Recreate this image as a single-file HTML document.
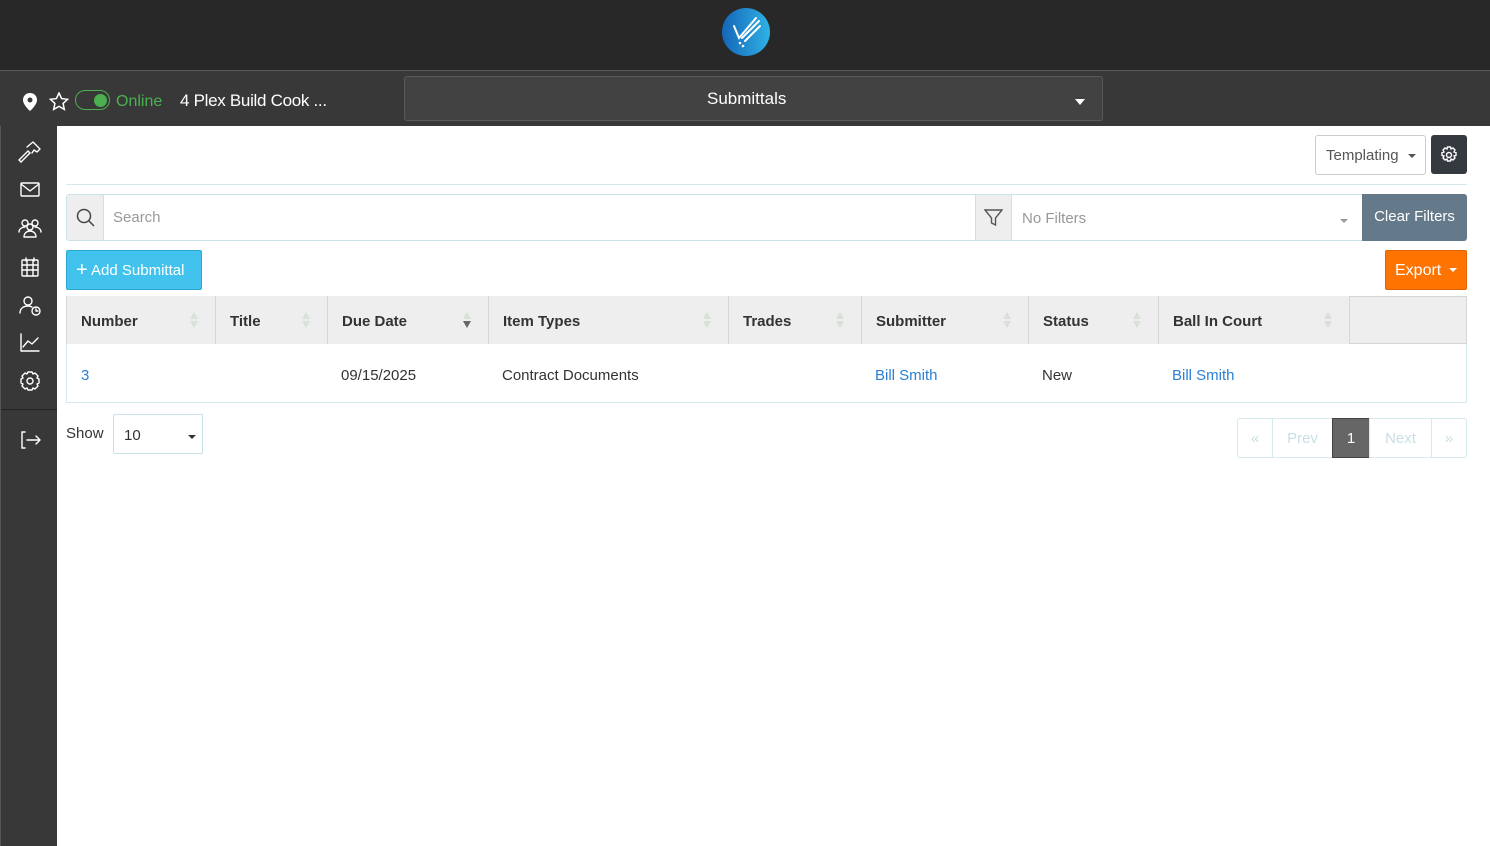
<!DOCTYPE html>
<html><head><meta charset="utf-8"><style>
*{box-sizing:border-box;margin:0;padding:0}
body{width:1490px;height:846px;overflow:hidden;background:#fff;font-family:"Liberation Sans",sans-serif;position:relative}
.a{position:absolute;white-space:nowrap}
.top{left:0;top:0;width:1490px;height:71px;background:#282828;border-bottom:1px solid #5a5a5a}
.bar2{left:0;top:71px;width:1490px;height:55px;background:#383838}
.side{left:0;top:126px;width:57px;height:720px;background:#383838;border-left:1px solid #555}
.hc{position:absolute;top:296px;height:48px;border-right:1px solid #d6d6d6;font-weight:bold;font-size:15px;color:#333;padding:17px 14px;background:#eee;white-space:nowrap}
.txt{font-size:15px;color:#333;top:367px}
.blue{color:#2a7fd4}
.pg{position:absolute;top:418px;height:40px;border:1px solid #d6e9ec;font-size:15px;color:#c8dfe3;text-align:center;line-height:39px}
</style></head><body>
<div class="a top"></div>
<svg class="a" style="left:722px;top:8px" width="48" height="48" viewBox="0 0 48 48">
<defs><linearGradient id="g" x1="0" x2="1"><stop offset="0" stop-color="#1565b8"/><stop offset="1" stop-color="#2fb2e6"/></linearGradient></defs>
<circle cx="24" cy="24" r="24" fill="url(#g)"/>
<g stroke="#fff" stroke-width="2" fill="none" stroke-linecap="round"><path d="M12 18 L17 30 L34 10"/><path d="M20 30 L37 13"/><path d="M23 33 L38 18"/></g>
<g fill="#fff"><circle cx="18" cy="35" r="1.3"/><circle cx="21" cy="38" r="1.3"/></g>
</svg>
<div class="a bar2"></div>
<svg class="a" style="left:23px;top:93px" width="14" height="18" viewBox="0 0 14 18"><path d="M7 0C3 0 0 3 0 7c0 5 7 11 7 11s7-6 7-11c0-4-3-7-7-7z" fill="#fff"/><circle cx="7" cy="7" r="2.5" fill="#383838"/></svg>
<svg class="a" style="left:49px;top:92px" width="20" height="19" viewBox="0 0 20 19"><path d="M10 1l2.6 5.6 6 .7-4.5 4.1 1.2 6L10 14.4 4.7 17.4l1.2-6L1.4 7.3l6-.7z" fill="none" stroke="#fff" stroke-width="1.5"/></svg>
<div class="a" style="left:75px;top:90px;width:35px;height:20px;border:1.5px solid #4caf50;border-radius:10px"></div>
<div class="a" style="left:94px;top:94px;width:13px;height:13px;border-radius:50%;background:#4caf50"></div>
<div class="a" style="left:116px;top:93px;color:#4caf50;font-size:16px">Online</div>
<div class="a" style="left:180px;top:91px;color:#fff;font-size:17px;letter-spacing:-0.3px">4 Plex Build Cook ...</div>
<div class="a" style="left:404px;top:76px;width:699px;height:45px;background:#424242;border:1px solid #5a5a5a;border-radius:3px"></div>
<div class="a" style="left:707px;top:89px;color:#fff;font-size:17px">Submittals</div>
<div class="a" style="left:1075px;top:99px;border-left:5px solid transparent;border-right:5px solid transparent;border-top:6px solid #fff"></div>
<div class="a side"></div>
<svg class="a" style="left:0;top:126px" width="57" height="340" viewBox="0 0 57 340" fill="none" stroke="#fff" stroke-width="1.4" stroke-linecap="round" stroke-linejoin="round">
<path d="M21 36l9-9M27 21l6-5 7 7-3 3-3-2-2 3"/><path d="M21 36l-2-2 9-9 2 2"/>
<rect x="21" y="57" width="18" height="13" rx="1"/><path d="M21 58l9 7 9-7"/>
<circle cx="25" cy="97" r="3"/><circle cx="35" cy="97" r="3"/><circle cx="30" cy="101" r="3"/><path d="M19 106c0-3 3-5 6-5M41 106c0-3-3-5-6-5M24 111c0-4 3-6 6-6s6 2 6 6z"/>
<rect x="22" y="134" width="16" height="16" rx="1"/><path d="M22 139h16M22 144h16M27 134v16M33 134v16M26 132v3M34 132v3"/>
<circle cx="28" cy="175" r="4"/><path d="M20 187c0-5 4-7 8-7 2 0 3 .5 4 1"/><circle cx="36" cy="185" r="4"/><path d="M36 183v2h2"/>
<path d="M21 208v17h18M23 221l5-6 4 3 6-6"/>
<circle cx="30" cy="255" r="3"/><path d="M28 246h4l1 2 2-1 3 3-1 2 2 1v4l-2 1 1 2-3 3-2-1-1 2h-4l-1-2-2 1-3-3 1-2-2-1v-4l2-1-1-2 3-3 2 1z"/>
<path d="M25 306h-3v16h3M27 314h13M36 310l4 4-4 4"/>
</svg>
<div class="a" style="left:1px;top:409px;width:56px;height:1px;background:#222"></div>

<div class="a" style="left:1315px;top:135px;width:111px;height:40px;border:1px solid #ccc;border-radius:3px;font-size:15px;color:#555;padding:11px 10px">Templating</div>
<div class="a" style="left:1408px;top:154px;border-left:4px solid transparent;border-right:4px solid transparent;border-top:4px solid #555"></div>
<div class="a" style="left:1431px;top:135px;width:36px;height:39px;background:#343a40;border-radius:3px"></div>
<svg class="a" style="left:1440px;top:146px" width="18" height="18" viewBox="0 0 18 18" fill="none" stroke="#fff" stroke-width="1.4"><circle cx="9" cy="9" r="2.5"/><path d="M7.5 1h3l.5 2 2-1 2 2-1 2 2 .5v3l-2 .5 1 2-2 2-2-1-.5 2h-3l-.5-2-2 1-2-2 1-2-2-.5v-3l2-.5-1-2 2-2 2 1z"/></svg>
<div class="a" style="left:66px;top:184px;width:1401px;height:1px;background:#d3e9ec"></div>

<div class="a" style="left:66px;top:194px;width:1297px;height:47px;border:1px solid #c9e3e8;border-radius:3px 0 0 3px"></div>
<div class="a" style="left:67px;top:195px;width:37px;height:45px;background:#eee;border-right:1px solid #c9e3e8"></div>
<svg class="a" style="left:76px;top:208px" width="20" height="20" viewBox="0 0 20 20" fill="none" stroke="#444" stroke-width="1.5"><circle cx="8" cy="8" r="6.5"/><path d="M13 13l5 5"/></svg>
<div class="a" style="left:113px;top:209px;font-size:15px;color:#999">Search</div>
<div class="a" style="left:975px;top:195px;width:37px;height:45px;background:#eee;border-left:1px solid #c9e3e8;border-right:1px solid #c9e3e8"></div>
<svg class="a" style="left:984px;top:209px" width="19" height="18" viewBox="0 0 19 18" fill="none" stroke="#555" stroke-width="1.4"><path d="M1 1h17l-6.5 8v7l-4-2V9z"/></svg>
<div class="a" style="left:1022px;top:210px;font-size:15px;color:#999">No Filters</div>
<div class="a" style="left:1340px;top:219px;border-left:4px solid transparent;border-right:4px solid transparent;border-top:4px solid #999"></div>
<div class="a" style="left:1362px;top:194px;width:105px;height:47px;background:#64798a;border-radius:0 3px 3px 0;color:#fff;font-size:15px;padding:14px 0;text-align:center">Clear Filters</div>

<div class="a" style="left:66px;top:250px;width:136px;height:40px;background:#41c3ed;border:1px solid #2aa8d2;border-radius:2px;color:#fff;font-size:15px;padding:11px 9px"><span style="font-size:20px;line-height:14px;position:relative;top:1px">+</span> Add Submittal</div>
<div class="a" style="left:1385px;top:250px;width:82px;height:40px;background:#ff7300;border:1px solid #e06500;border-radius:2px;color:#fff;font-size:16px;padding:11px 9px">Export</div>
<div class="a" style="left:1449px;top:268px;border-left:4px solid transparent;border-right:4px solid transparent;border-top:4px solid #fff"></div>

<div class="a" style="left:66px;top:296px;width:1401px;height:107px;border:1px solid #d4e9ec"></div>
<div class="a" style="left:66px;top:296px;width:1401px;height:48px;background:#eee;border:1px solid #d6d6d6"></div>
<div class="hc" style="left:67px;width:149px">Number</div>
<div class="hc" style="left:216px;width:112px">Title</div>
<div class="hc" style="left:328px;width:161px">Due Date</div>
<div class="hc" style="left:489px;width:240px">Item Types</div>
<div class="hc" style="left:729px;width:133px">Trades</div>
<div class="hc" style="left:862px;width:167px">Submitter</div>
<div class="hc" style="left:1029px;width:130px">Status</div>
<div class="hc" style="left:1159px;width:191px">Ball In Court</div>
<svg width="0" height="0" style="position:absolute"><defs><g id="s"><path d="M4 0l4 7H0z" fill="#d8e0d8"/><path d="M4 16l4-7H0z" fill="#d8e0d8"/></g></defs></svg>
<svg class="a" style="left:190px;top:312px" width="8" height="16"><use href="#s"/></svg>
<svg class="a" style="left:302px;top:312px" width="8" height="16"><use href="#s"/></svg>
<svg class="a" style="left:463px;top:312px" width="8" height="16"><path d="M4 0l4 7H0z" fill="#d8e0d8"/><path d="M4 16l4-7H0z" fill="#666"/></svg>
<svg class="a" style="left:703px;top:312px" width="8" height="16"><use href="#s"/></svg>
<svg class="a" style="left:836px;top:312px" width="8" height="16"><use href="#s"/></svg>
<svg class="a" style="left:1003px;top:312px" width="8" height="16"><use href="#s"/></svg>
<svg class="a" style="left:1133px;top:312px" width="8" height="16"><use href="#s"/></svg>
<svg class="a" style="left:1324px;top:312px" width="8" height="16"><use href="#s"/></svg>
<div class="a txt blue" style="left:81px">3</div>
<div class="a txt" style="left:341px">09/15/2025</div>
<div class="a txt" style="left:502px">Contract Documents</div>
<div class="a txt blue" style="left:875px">Bill Smith</div>
<div class="a txt" style="left:1042px">New</div>
<div class="a txt blue" style="left:1172px">Bill Smith</div>

<div class="a" style="left:66px;top:425px;font-size:15px;color:#333">Show</div>
<div class="a" style="left:113px;top:414px;width:90px;height:40px;border:1px solid #c9e3e8;border-radius:2px;font-size:15px;color:#333;padding:12px 10px">10</div>
<div class="a" style="left:188px;top:435px;border-left:4px solid transparent;border-right:4px solid transparent;border-top:4px solid #333"></div>

<div class="pg" style="left:1237px;width:36px;border-radius:3px 0 0 3px">«</div>
<div class="pg" style="left:1272px;width:61px">Prev</div>
<div class="pg" style="left:1332px;width:38px;background:#666;border-color:#444;color:#fff">1</div>
<div class="pg" style="left:1369px;width:63px">Next</div>
<div class="pg" style="left:1431px;width:36px;border-radius:0 3px 3px 0">»</div>
</body></html>
